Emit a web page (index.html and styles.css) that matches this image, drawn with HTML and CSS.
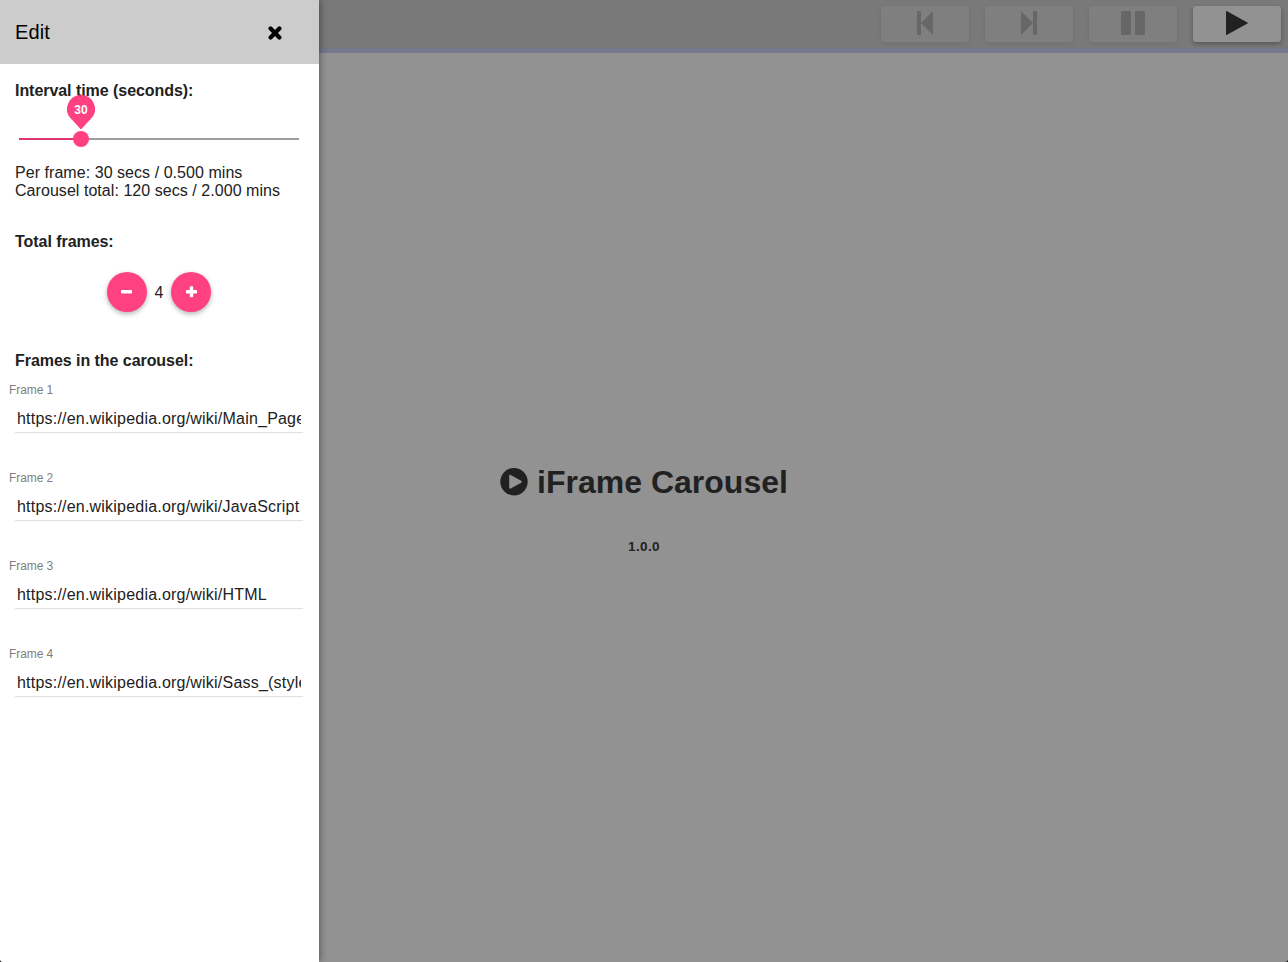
FILE: index.html
```html
<!DOCTYPE html>
<html lang="en">
<head>
<meta charset="utf-8">
<title>iFrame Carousel</title>
<link rel="stylesheet" href="styles.css">
</head>
<body>
<div class="app">
  <aside class="sidenav">
    <header class="sidenav-header">
      <h1 class="sidenav-title">Edit</h1>
      <button class="close" aria-label="Close"><svg width="14" height="14" viewBox="0 0 14 14"><path d="M2.6 2.6l8.8 8.8M11.4 2.6l-8.8 8.8" stroke="#000" stroke-width="4.2" stroke-linecap="round"/></svg></button>
    </header>
    <div class="sidenav-body">
      <h2 class="heading heading-interval">Interval time (seconds):</h2>
      <div class="slider">
        <div class="track"></div>
        <div class="thumb"></div>
        <div class="bubble">
          <svg class="pin" width="28" height="35" viewBox="0 0 28 35"><path d="M14 0a14 14 0 0 1 10.6 23.1L14 34.6 3.4 23.1A14 14 0 0 1 14 0z" fill="#ff4081"/></svg>
          <span class="bubble-value">30</span>
        </div>
      </div>
      <div class="summary">
        <div class="summary-frame">Per frame: 30 secs / 0.500 mins</div>
        <div class="summary-total">Carousel total: 120 secs / 2.000 mins</div>
      </div>
      <h2 class="heading heading-total">Total frames:</h2>
      <div class="counter">
        <button class="fab" aria-label="Remove frame"><svg width="12" height="12" viewBox="0 0 12 12"><rect x="0" y="4" width="11" height="3.4" rx=".7" fill="#fff"/></svg></button>
        <span class="count">4</span>
        <button class="fab" aria-label="Add frame"><svg width="12" height="12" viewBox="0 0 12 12"><rect x="1" y="4" width="11" height="3.4" rx=".7" fill="#fff"/><rect x="4.8" y=".2" width="3.4" height="11" rx=".7" fill="#fff"/></svg></button>
      </div>
      <h2 class="heading heading-frames">Frames in the carousel:</h2>
      <div class="fields">
        <label class="field"><span class="label">Frame 1</span><span class="input"><span class="value">https://en.wikipedia.org/wiki/Main_Page</span></span></label>
        <label class="field"><span class="label">Frame 2</span><span class="input"><span class="value">https://en.wikipedia.org/wiki/JavaScript</span></span></label>
        <label class="field"><span class="label">Frame 3</span><span class="input"><span class="value">https://en.wikipedia.org/wiki/HTML</span></span></label>
        <label class="field"><span class="label">Frame 4</span><span class="input"><span class="value">https://en.wikipedia.org/wiki/Sass_(style</span></span></label>
      </div>
    </div>
  </aside>
  <main class="main">
    <nav class="toolbar">
      <button class="tool disabled" aria-label="Previous"><svg width="24" height="24" viewBox="0 0 24 24"><rect x="4" width="4" height="24" rx=".8"/><path d="M20 0v24L8 12z"/></svg></button>
      <button class="tool disabled" aria-label="Next"><svg width="24" height="24" viewBox="0 0 24 24"><path d="M4 0v24l12-12z"/><rect x="16" width="4" height="24" rx=".8"/></svg></button>
      <button class="tool disabled" aria-label="Pause"><svg width="24" height="24" viewBox="0 0 24 24"><rect width="10" height="24" rx="1"/><rect x="14" width="10" height="24" rx="1"/></svg></button>
      <button class="tool" aria-label="Play"><svg width="24" height="24" viewBox="0 0 24 24"><path d="M1 .7Q1-.3 2 .3L22.5 11.5q.8.5 0 1L2 23.8q-1 .5-1-.5z"/></svg></button>
    </nav>
    <section class="splash">
      <h1 class="brand"><svg class="brand-icon" width="28" height="28" viewBox="0 0 28 28"><path fill-rule="evenodd" d="M14 0a13.7 13.7 0 1 1 0 27.4A13.7 13.7 0 0 1 14 0zM10.7 6.9Q9.3 6.3 9.2 7.8v11.8q.1 1.5 1.5.9L21.2 14.7q1-1 0-1.9z" fill="#212121"/></svg><span class="brand-name">iFrame Carousel</span></h1>
      <p class="version">1.0.0</p>
    </section>
  </main>
</div>
</body>
</html>
```

FILE: styles.css
```css
* { box-sizing: border-box; }
html { background: #000; }
body { margin: 0; font-family: "Liberation Sans", Arial, sans-serif; color: #212121; }
button { border: 0; padding: 0; display: flex; align-items: center; justify-content: center; }
svg { display: block; }
h1, h2, p { margin: 0; }
.app { display: flex; height: 962px; overflow: hidden; border-radius: 0 0 3px 3px; background: #929292; }

.sidenav { position: relative; flex: none; width: 319px; background: #fff; box-shadow: 1px 0 7px rgba(0, 0, 0, .4); z-index: 1; }
.sidenav-header { display: flex; align-items: center; justify-content: space-between; height: 64px; padding: 0 37px 0 15px; background: #ccc; color: #000; }
.sidenav-title { font-size: 20px; font-weight: 400; line-height: 24px; letter-spacing: .1px; }
.close { background: none; }
.close svg { margin-top: 1px; }
.sidenav-body { padding: 18px 16px 0 15px; }
.heading { font-size: 16px; line-height: 18px; font-weight: 700; letter-spacing: -.05px; white-space: nowrap; }

.slider { position: relative; height: 48px; margin: 15px 4px 0 4px; }
.track { height: 48px; background: linear-gradient(to right, #e0366f 62px, #9e9e9e 62px) 0 23px / 100% 2px no-repeat; }
.thumb { position: absolute; left: 54px; top: 16px; width: 16px; height: 16px; border-radius: 50%; background: #ff4081; }
.bubble { position: absolute; left: 48px; top: -20px; width: 28px; height: 35px; }
.bubble-value { position: absolute; left: 0; top: 7px; width: 28px; color: #fff; font-size: 12px; font-weight: 700; line-height: 16px; text-align: center; }
.summary { margin-top: 1px; font-size: 16px; line-height: 18px; letter-spacing: .05px; white-space: nowrap; }
.heading-total { margin-top: 33px; }
.counter { display: flex; align-items: center; justify-content: center; gap: 7px; height: 40px; margin-top: 21px; }
.fab { width: 40px; height: 40px; border-radius: 50%; background: #ff4081; box-shadow: 0 2px 5px rgba(0, 0, 0, .3); }
.count { width: 10px; padding-top: 2px; text-align: center; font-size: 16px; line-height: 18px; }
.heading-frames { margin-top: 40px; }
.fields { display: grid; gap: 37px; margin-top: 12px; }
.field { display: block; height: 51px; }
.label { display: block; margin-left: -6px; font-size: 12px; line-height: 16px; letter-spacing: -.08px; color: #808080; }
.input { display: block; width: 288px; height: 30px; margin-top: 5px; padding: 7px 2px 0; border-bottom: 1px solid #e0e0e0; }
.value { display: block; overflow: hidden; height: 20px; font-size: 16px; line-height: 18px; letter-spacing: .21px; white-space: nowrap; }

.main { flex: 1; display: flex; flex-direction: column; }
.toolbar { display: flex; justify-content: flex-end; gap: 16px; height: 53px; padding: 6px 7px 0 0; background: #797979; border-bottom: 5px solid #75788b; }
.tool { width: 88px; height: 36px; border-radius: 3px; background: #929292; box-shadow: 0 2px 5px rgba(0, 0, 0, .3); }
.tool svg { fill: #212121; margin-top: -2px; }
.disabled { background: #7f7f7f; box-shadow: 0 2px 5px rgba(0, 0, 0, .07); }
.disabled svg { fill: #676767; }
.splash { display: flex; flex-direction: column; align-items: center; width: 650px; padding-top: 409px; }
.brand { display: flex; align-items: center; gap: 9px; height: 40px; font-size: 32px; line-height: 40px; white-space: nowrap; }
.version { margin-top: 36px; font-size: 13.5px; font-weight: 700; line-height: 17px; letter-spacing: .4px; }
```
